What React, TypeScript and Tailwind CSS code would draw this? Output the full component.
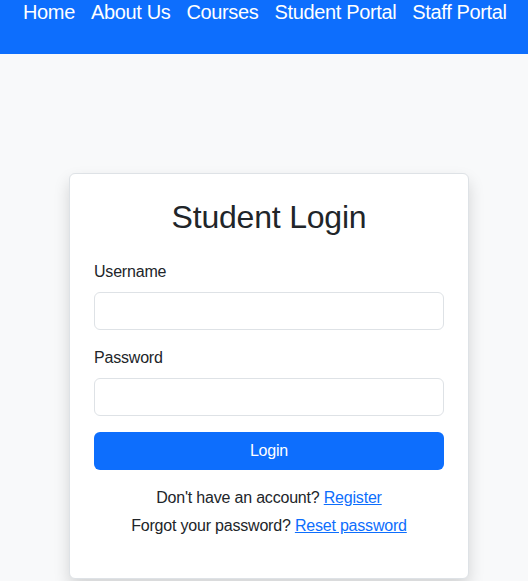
const navItems = ["Home", "About Us", "Courses", "Student Portal", "Staff Portal"];

export default function App() {
  return (
    <div
      className="min-h-[581px] bg-[#f8f9fa] text-[#212529] tracking-[-0.2px]"
      style={{ fontFamily: '"Liberation Sans", Arial, sans-serif' }}
    >
      <header className="h-[54px] overflow-hidden bg-[#0d6efd]">
        <nav className="flex gap-[16px] whitespace-nowrap pl-[23px]">
          {navItems.map((item) => (
            <a key={item} href="#" className="text-[20px] leading-[24px] tracking-[-0.35px] text-white">
              {item}
            </a>
          ))}
        </nav>
      </header>

      <main className="pt-[119px] pb-[3px]">
        <div className="ml-[69px] w-[400px] rounded-[6px] border border-[#dee2e6] bg-white p-6 shadow-[0_8px_16px_rgba(0,0,0,0.15)]">
          <h2 className="mb-6 text-center text-[32px] leading-[38.4px] font-normal">Student Login</h2>
          <form>
            <div className="mb-4">
              <label className="mb-2 block text-base leading-6">Username</label>
              <input
                type="text"
                className="block h-[38px] w-full rounded-[6px] border border-[#dee2e6] bg-white px-3 outline-none"
              />
            </div>
            <div className="mb-4">
              <label className="mb-2 block text-base leading-6">Password</label>
              <input
                type="password"
                className="block h-[38px] w-full rounded-[6px] border border-[#dee2e6] bg-white px-3 outline-none"
              />
            </div>
            <button
              type="submit"
              className="block h-[38px] w-full rounded-[6px] bg-[#0d6efd] text-base leading-6 text-white"
            >
              Login
            </button>
          </form>
          <div className="mt-4 text-center text-base leading-6">
            <p className="mb-1">
              Don't have an account?{" "}
              <a href="#" className="text-[#0d6efd] underline">
                Register
              </a>
            </p>
            <p className="mb-4">
              Forgot your password?{" "}
              <a href="#" className="text-[#0d6efd] underline">
                Reset password
              </a>
            </p>
          </div>
        </div>
      </main>
    </div>
  );
}
